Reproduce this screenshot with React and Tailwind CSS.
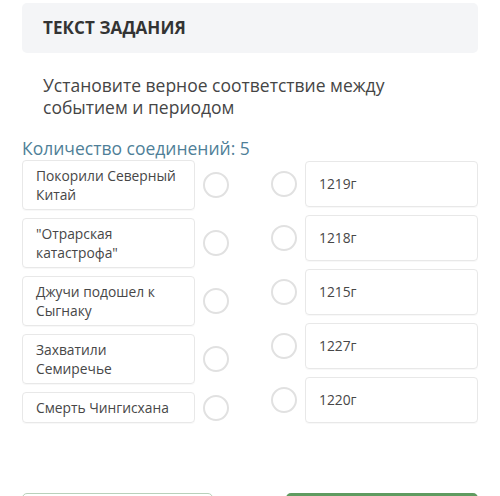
export default function App() {
  const left = [
    { t: ["Покорили Северный", "Китай"], h: "h-[50px]" },
    { t: ['"Отрарская', 'катастрофа"'], h: "h-[50px]" },
    { t: ["Джучи подошел к", "Сыгнаку"], h: "h-[50px]" },
    { t: ["Захватили", "Семиречье"], h: "h-[50px]" },
    { t: ["Смерть Чингисхана"], h: "h-[31px]" },
  ];
  const right = ["1219г", "1218г", "1215г", "1227г", "1220г"];
  return (
    <div
      className="w-[500px] h-[496px] overflow-hidden bg-white px-[22px] pt-[3px]"
      style={{ fontFamily: '"Open Sans", "Noto Sans", sans-serif' }}
    >
      <div className="h-[50px] rounded-[5px] bg-[#f4f5f7] flex items-center pl-[21px] text-[17px] font-bold text-[#333333] tracking-[0.1px]">
        ТЕКСТ ЗАДАНИЯ
      </div>
      <div className="mt-[21px] pl-[21px] text-[17.5px] leading-[22px] text-[#454545]">
        Установите верное соответствие между
        <br />
        событием и периодом
      </div>
      <div className="mt-[19px] text-[17.5px] leading-[22px] text-[#4f7f98]">
        Количество соединений: 5
      </div>
      <div className="flex justify-between">
        <div className="mt-[1px] flex flex-col gap-[8px] w-[207px]">
          {left.map((item, i) => (
            <div key={i} className="flex items-center gap-[8px]">
              <div
                className={`w-[173px] ${item.h} rounded-[4px] border border-[#e8e8e8] px-[13px] flex flex-col justify-center text-[13.8px] leading-[19px] text-[#474747] shadow-[0_1px_1px_rgba(0,0,0,0.03)]`}
              >
                {item.t.map((l, j) => (
                  <span key={j}>{l}</span>
                ))}
              </div>
              <div className="w-[26px] h-[26px] rounded-full border-2 border-[#e1e1e1] shrink-0" />
            </div>
          ))}
        </div>
        <div className="mt-[2px] flex flex-col gap-[8px] w-[207px]">
          {right.map((r, i) => (
            <div key={i} className="flex items-center gap-[8px]">
              <div className="w-[26px] h-[26px] rounded-full border-2 border-[#e1e1e1] shrink-0" />
              <div className="w-[174px] h-[46px] rounded-[4px] border border-[#e8e8e8] pl-[13px] flex items-center text-[13.8px] text-[#474747] shadow-[0_1px_1px_rgba(0,0,0,0.03)]">
                {r}
              </div>
            </div>
          ))}
        </div>
      </div>
      <div className="mt-[70px] flex justify-between">
        <div className="w-[191px] h-[40px] rounded-[5px] border border-[#b9d1bb]" />
        <div className="w-[192px] h-[40px] rounded-[5px] bg-[#5f9b60]" />
      </div>
    </div>
  );
}
